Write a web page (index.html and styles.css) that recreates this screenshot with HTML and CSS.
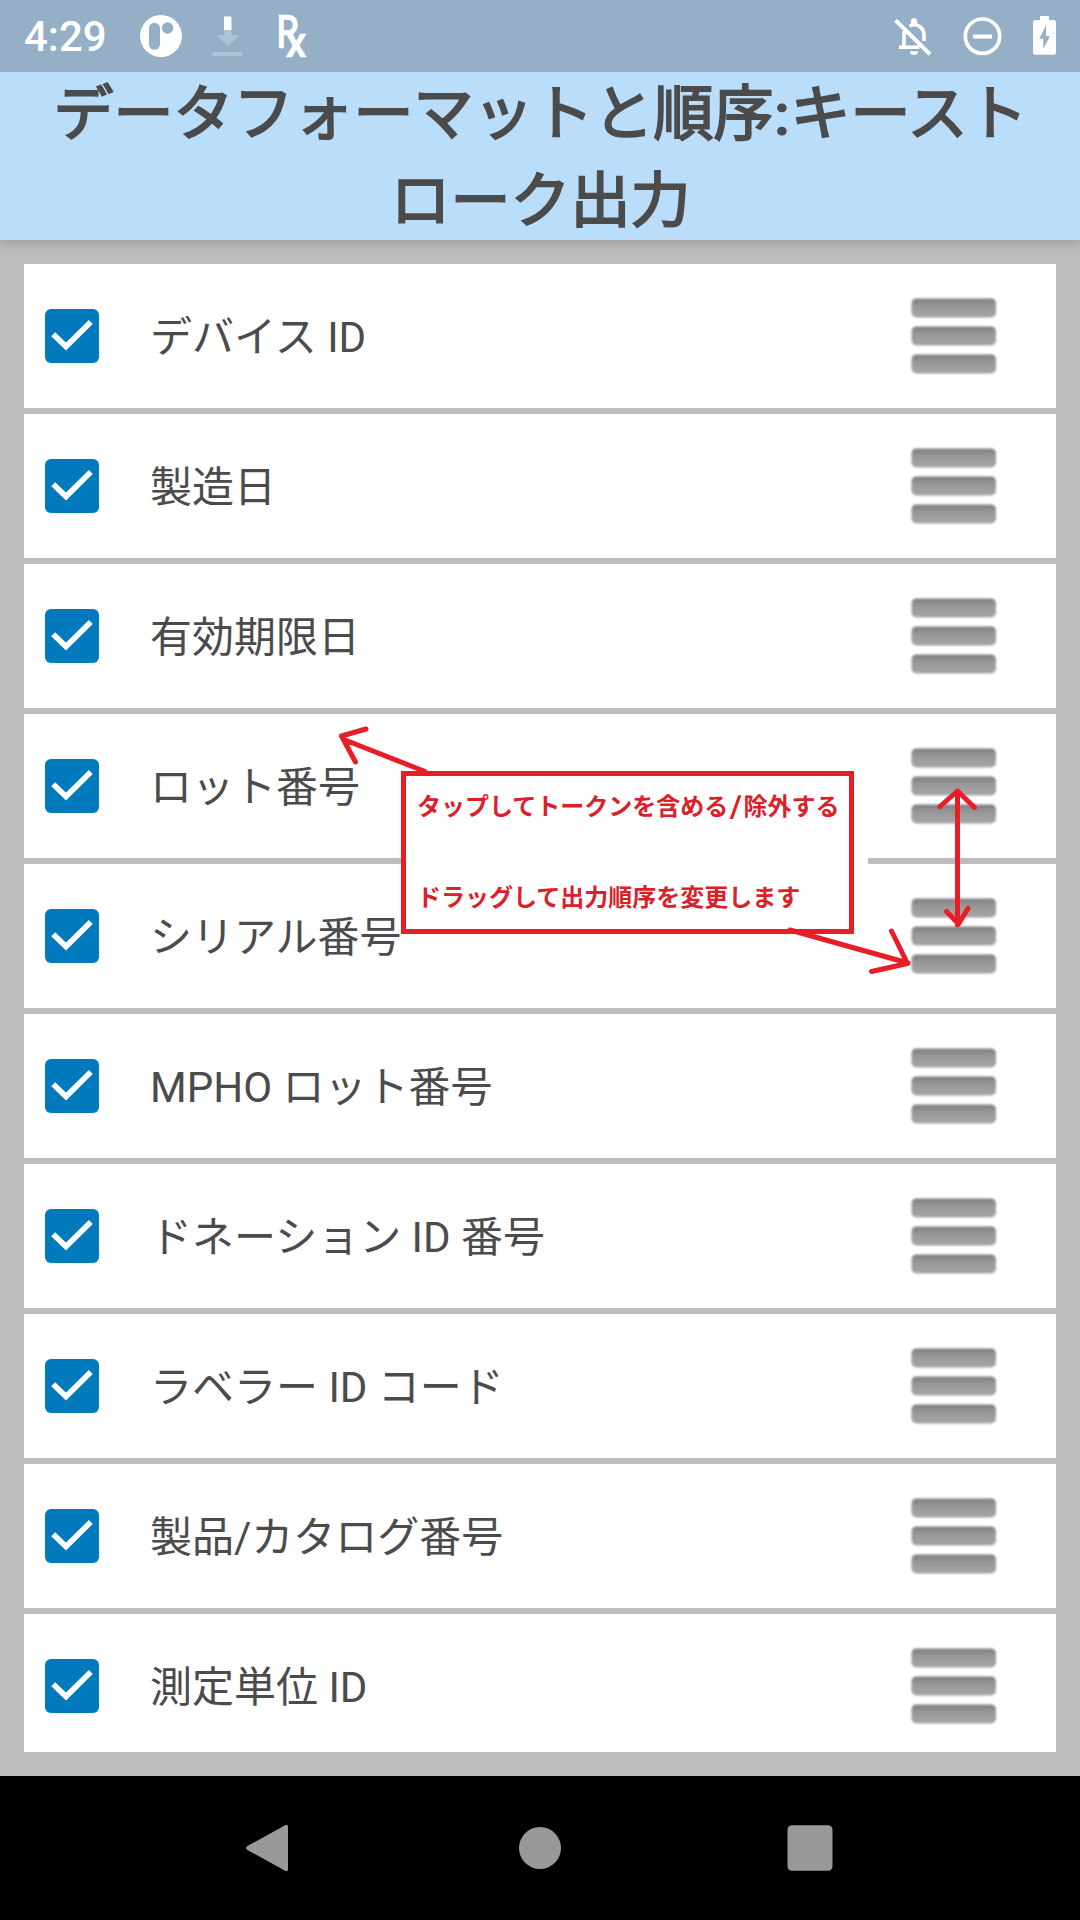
FILE: index.html
```html
<!DOCTYPE html>
<html lang="ja">
<head>
<meta charset="utf-8">
<title>データフォーマットと順序</title>
<link rel="stylesheet" href="styles.css">
</head>
<body>
<svg class="defs" width="0" height="0">
  <defs>
    <linearGradient id="bar" x1="0" y1="0" x2="0" y2="1">
      <stop offset="0" stop-color="#7c7c7c"/>
      <stop offset=".4" stop-color="#989898"/>
      <stop offset="1" stop-color="#a6a6a6"/>
    </linearGradient>
    <filter id="soft" x="-10%" y="-10%" width="120%" height="120%"><feGaussianBlur stdDeviation="1.1"/></filter>
    <symbol id="check" viewBox="0 0 54 54">
      <rect width="54" height="54" rx="6" fill="#007abc"/>
      <path d="M8.2 25.2 21 37.6 45.8 13" fill="none" stroke="#fff" stroke-width="5.6"/>
    </symbol>
    <symbol id="handle" viewBox="0 0 92 84">
      <g fill="url(#bar)" filter="url(#soft)">
        <rect x="3.500" y="4.4" width="84.5" height="19" rx="5"/>
        <rect x="3.500" y="32.4" width="84.5" height="19" rx="5"/>
        <rect x="3.500" y="60.4" width="84.5" height="19" rx="5"/>
      </g>
    </symbol>
  </defs>
</svg>
<div class="screen">
  <div class="status">
    <span class="clock">4:29</span>
    <svg class="status-left" width="180" height="72" viewBox="135 0 180 72">
      <circle cx="161" cy="36" r="21" fill="#fff"/>
      <rect x="149" y="22.8" width="11" height="27" rx="5.5" fill="#95afc6"/>
      <circle cx="167.6" cy="28" r="5.7" fill="#95afc6"/>
      <path d="M224 30h7.5v5.5h8L228 45.5 216.500 35.500H224zM212.500 52h29.500v4h-29.500z" fill="#adc3d6"/>
      <path d="M224 16.500h7.500V30H224z" fill="#fff"/>
      <g class="rx">
        <text transform="translate(276.400 48.300) scale(.77 1)" font-size="46.500">R</text>
        <text transform="translate(285.600 57)" font-size="42">x</text>
      </g>
    </svg>
    <svg class="status-right" width="180" height="72" viewBox="880 0 180 72">
      <g fill="none" stroke="#fff">
        <path d="M895.600 20.400 930 54.200" stroke-width="4"/>
        <path d="M904 31v16.500M899 47.300h20.500M909.500 26c7-3.500 14.500 1 14.500 9.500V41" stroke-width="3.600"/>
        <circle cx="982.500" cy="36.200" r="17.200" stroke-width="3.700"/>
        <path d="M973 36.500h19" stroke-width="4"/>
      </g>
      <path d="M910.800 22.500v-1a3.200 3.200 0 0 1 6.400 0v3l-5 1zM910 51.300h8a4 3.800 0 0 1-8 0z" fill="#fff"/>
      <path d="M1040 16h9v4h4.500a2.500 2.500 0 0 1 2.500 2.500v29.700a2.500 2.500 0 0 1-2.500 2.500h-18a2.500 2.500 0 0 1-2.500-2.500V22.500a2.500 2.500 0 0 1 2.500-2.500h4.500z" fill="#fff"/>
      <path d="M1046 25.300 1039.300 38.700h4V49l6.700-13h-4z" fill="#95afc6"/>
    </svg>
  </div>
  <div class="header">
    <h1 class="title">データフォーマットと順序<span class="colon">:</span>キースト<br>ローク出力</h1>
  </div>
  <ul class="list">
    <li class="row"><svg class="check"><use href="#check"/></svg><span class="label">デバイス ID</span><svg class="handle"><use href="#handle"/></svg></li>
    <li class="row"><svg class="check"><use href="#check"/></svg><span class="label">製造日</span><svg class="handle"><use href="#handle"/></svg></li>
    <li class="row"><svg class="check"><use href="#check"/></svg><span class="label">有効期限日</span><svg class="handle"><use href="#handle"/></svg></li>
    <li class="row"><svg class="check"><use href="#check"/></svg><span class="label">ロット番号</span><svg class="handle"><use href="#handle"/></svg></li>
    <li class="row"><svg class="check"><use href="#check"/></svg><span class="label">シリアル番号</span><svg class="handle"><use href="#handle"/></svg></li>
    <li class="row"><svg class="check"><use href="#check"/></svg><span class="label">MPHO ロット番号</span><svg class="handle"><use href="#handle"/></svg></li>
    <li class="row"><svg class="check"><use href="#check"/></svg><span class="label">ドネーション ID 番号</span><svg class="handle"><use href="#handle"/></svg></li>
    <li class="row"><svg class="check"><use href="#check"/></svg><span class="label">ラベラー ID コード</span><svg class="handle"><use href="#handle"/></svg></li>
    <li class="row"><svg class="check"><use href="#check"/></svg><span class="label">製品/カタログ番号</span><svg class="handle"><use href="#handle"/></svg></li>
    <li class="row"><svg class="check"><use href="#check"/></svg><span class="label">測定単位 ID</span><svg class="handle"><use href="#handle"/></svg></li>
  </ul>
  <div class="nav">
    <svg width="60" height="60" viewBox="0 0 60 60"><path d="M7.500 28 45.500 7Q48 6 48 9V51Q48 54 45.500 53L7.500 32Q4.500 30 7.500 28z"/></svg>
    <svg width="60" height="60" viewBox="0 0 60 60"><circle cx="30" cy="30" r="21"/></svg>
    <svg width="60" height="60" viewBox="0 0 60 60"><rect x="7.500" y="7.300" width="45" height="45.400" rx="4.500"/></svg>
  </div>
  <div class="callout">
    <div class="note">
      <p class="tip">タップしてトークンを含める<span class="slash">/</span>除外する</p>
      <p class="tip tip-drag">ドラッグして出力順序を変更します</p>
    </div>
  </div>
  <svg class="arrows" width="660" height="270" viewBox="330 715 660 270">
    <path d="M425 771.500 345 740M366 729 341.500 736 355.500 762M790 930 908 963M891.500 931 907.500 963.500 871.500 971.500M957.500 791V925M940 806.500 957.500 791 974.500 807.500M946.500 911.500 958.500 924 968 908.500"/>
  </svg>
</div>
</body>
</html>
```
FILE: styles.css
```css
* { box-sizing: border-box; }

body {
  margin: 0;
  font-family: Roboto, "Noto Sans CJK JP", sans-serif;
  color: #4b4b4b;
}

.defs { position: absolute; }

.screen {
  position: relative;
  display: flex;
  flex-direction: column;
  width: 1080px;
  height: 1920px;
  overflow: hidden;
  background: #bdbdbd;
}

.status {
  display: flex;
  align-items: center;
  flex: none;
  height: 72px;
  padding: 0 20px 0 24px;
  background: #95afc6;
  color: #fff;
}

.clock {
  width: 111px;
  font-size: 42px;
  font-weight: 500;
  line-height: 72px;
  padding-top: 2px;
}

.status-right { margin-left: auto; }

.rx {
  fill: #fff;
  stroke: #fff;
  stroke-width: .5;
  font-family: Roboto, sans-serif;
  font-weight: 500;
}

.header {
  flex: none;
  display: flex;
  justify-content: center;
  align-items: flex-start;
  height: 168px;
  padding-left: 1px;
  background: #badefa;
  box-shadow: 0 4px 12px -1px rgba(0, 0, 0, .2);
  clip-path: inset(0 0 -24px 0);
}

.title {
  margin: -7px 0 0;
  font-family: "Noto Sans CJK JP", sans-serif;
  font-size: 60px;
  font-weight: 400;
  line-height: 87px;
  text-align: center;
  white-space: nowrap;
  -webkit-text-stroke: 2px #4b4b4b;
}

.colon {
  font-family: Roboto, sans-serif;
  font-weight: 700;
  line-height: 0;
  -webkit-text-stroke: 0;
}

.list {
  flex: none;
  display: flex;
  flex-direction: column;
  gap: 6px;
  height: 1488px;
  margin: 24px 24px;
  padding: 0;
  overflow: hidden;
  list-style: none;
}

.row {
  flex: none;
  display: flex;
  align-items: center;
  height: 144px;
  padding: 0 56px 0 21px;
  background: #fff;
}

.check { width: 54px; height: 54px; }

.label {
  flex: 1;
  padding: 4px 0 0 51px;
  font-size: 42px;
  line-height: 60px;
  white-space: nowrap;
}

.handle { width: 92px; height: 84px; }

.nav {
  flex: none;
  display: flex;
  justify-content: center;
  align-items: center;
  gap: 210px;
  height: 144px;
  background: #000;
  fill: #999;
}

.callout {
  position: absolute;
  left: 401px;
  top: 771px;
  width: 467px;
  height: 163px;
  background: #fff;
}

.note {
  width: 453px;
  height: 163px;
  padding: 11px 0 0 11px;
  border: 5px solid #e81e26;
}

.tip {
  margin: 0;
  color: #dc2028;
  font-family: "Noto Sans CJK JP", sans-serif;
  font-size: 24px;
  font-weight: 700;
  line-height: 36px;
  white-space: nowrap;
}

.slash {
  display: inline-block;
  margin: 0 3px;
  transform: scaleX(1.4);
}

.tip-drag { margin-top: 55px; }

.arrows {
  position: absolute;
  left: 330px;
  top: 715px;
  fill: none;
  stroke: #e81e26;
  stroke-width: 5;
  stroke-linecap: round;
  stroke-linejoin: round;
}
```
